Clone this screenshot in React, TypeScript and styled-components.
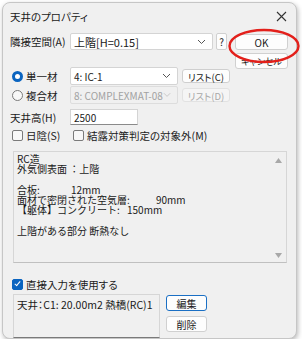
import React from 'react'
import styled, { createGlobalStyle } from 'styled-components'

const GlobalStyle = createGlobalStyle`
    html, body {
        margin: 0;
        background: #ffffff;
    }
    body {
        font-family: 'Noto Sans CJK JP', 'Noto Sans', sans-serif;
        font-feature-settings: 'palt';
        color: #1a1a1a;
    }
`

const layers = [
    { name: '合板:', value: '12mm', tab: 54 },
    { name: '面材で密閉された空気層:', value: '90mm', tab: 139 },
    { name: '【躯体】コンクリート:', value: '150mm', tab: 110 },
]

const App = () => {
    return (
        <>
            <GlobalStyle />
            <Dialog>
                <TitleBar>
                    <span>天井のプロパティ</span>
                    <svg width="11" height="11" viewBox="0 0 11 11">
                        <path d="M1 1 L10 10 M10 1 L1 10" stroke="#333" strokeWidth="1.1" />
                    </svg>
                </TitleBar>
                <Body>
                    <TopSection>
                        <Fields>
                            <Row $top={4} $height={17}>
                                <Label>隣接空間(A)</Label>
                                <Select $width={143} $large>
                                    <span>上階[H=0.15]</span>
                                    <Chevron />
                                </Select>
                                <HelpButton>?</HelpButton>
                            </Row>
                            <Row $top={17} $height={18}>
                                <RadioLabel>
                                    <Radio $checked />
                                    単一材
                                </RadioLabel>
                                <Select $width={108}>
                                    <span>4: IC-1</span>
                                    <Chevron />
                                </Select>
                                <SmallButton>リスト(C)</SmallButton>
                            </Row>
                            <Row $top={1} $height={18}>
                                <RadioLabel>
                                    <Radio />
                                    複合材
                                </RadioLabel>
                                <Select $width={108} $disabled>
                                    <span>8: COMPLEXMAT-08</span>
                                    <Chevron $disabled />
                                </Select>
                                <SmallButton $disabled>リスト(D)</SmallButton>
                            </Row>
                            <Row $top={5} $height={16}>
                                <Label>天井高(H)</Label>
                                <TextInput>2500</TextInput>
                            </Row>
                            <Row $top={4} $height={12}>
                                <CheckLabel $width={61}>
                                    <Check />
                                    日陰(S)
                                </CheckLabel>
                                <CheckLabel>
                                    <Check />
                                    結露対策判定の対象外(M)
                                </CheckLabel>
                            </Row>
                        </Fields>
                        <Buttons>
                            <DialogButton>OK</DialogButton>
                            <DialogButton $narrow>キャンセル</DialogButton>
                        </Buttons>
                    </TopSection>
                    <InfoPanel>
                        <InfoText>
                            <div>RC造</div>
                            <div>外気側表面 ：上階</div>
                            <div>&nbsp;</div>
                            {layers.map((layer) => (
                                <div key={layer.name}>
                                    <TabStop $w={layer.tab}>{layer.name}</TabStop>
                                    {layer.value}
                                </div>
                            ))}
                            <div>&nbsp;</div>
                            <div>上階がある部分 断熱なし</div>
                        </InfoText>
                        <ScrollTrack>
                            <svg width="7" height="5" viewBox="0 0 7 5">
                                <path d="M3.5 0 L7 5 L0 5 Z" fill="#a8a8a8" />
                            </svg>
                            <svg width="7" height="5" viewBox="0 0 7 5">
                                <path d="M0 0 L7 0 L3.5 5 Z" fill="#a8a8a8" />
                            </svg>
                        </ScrollTrack>
                    </InfoPanel>
                    <DirectRow>
                        <Check $checked />
                        直接入力を使用する
                    </DirectRow>
                    <BottomRow>
                        <ListBox>天井：C1: 20.00m2 熱橋(RC)1</ListBox>
                        <SideButtons>
                            <DialogButton $default>編集</DialogButton>
                            <DialogButton>削除</DialogButton>
                        </SideButtons>
                    </BottomRow>
                </Body>
                <Highlight width="72" height="36" viewBox="0 0 72 36">
                    <ellipse cx="36" cy="18" rx="34.5" ry="16" fill="none" stroke="#e3201b" strokeWidth="2.4" />
                </Highlight>
            </Dialog>
        </>
    )
}

const Chevron = ({ $disabled }: { $disabled?: boolean }) => (
    <svg width="9" height="6" viewBox="0 0 9 6">
        <path d="M1 1 L4.5 4.5 L8 1" fill="none" stroke={$disabled ? '#c4c4c4' : '#555'} strokeWidth="1" />
    </svg>
)

const Dialog = styled.div`
    position: relative;
    box-sizing: border-box;
    margin: 2px 0 0 2px;
    width: 295px;
    height: 337px;
    border: 1px solid #c6c6c6;
    border-radius: 8px;
    background: #f0f0f0;
    box-shadow: 1px 2px 5px rgba(0, 0, 0, 0.28);
    display: flex;
    flex-direction: column;
`
const TitleBar = styled.div`
    height: 26px;
    padding: 0 7px;
    display: flex;
    align-items: center;
    justify-content: space-between;
    font-size: 10.5px;
    color: #1a1a1a;
    svg {
        margin-right: 2px;
    }
`
const Body = styled.div`
    padding: 0 7px;
    display: flex;
    flex-direction: column;
    font-size: 10.5px;
`
const TopSection = styled.div`
    display: flex;
    gap: 5px;
`
const Fields = styled.div`
    width: 220px;
    display: flex;
    flex-direction: column;
`
const Row = styled.div<{ $top: number; $height: number }>`
    margin-top: ${(p) => p.$top}px;
    height: ${(p) => p.$height}px;
    display: flex;
    align-items: center;
`
const Label = styled.div`
    width: 60px;
    font-size: 10.5px;
    white-space: nowrap;
`
const Select = styled.div<{ $width: number; $disabled?: boolean; $large?: boolean }>`
    box-sizing: border-box;
    width: ${(p) => p.$width}px;
    height: 100%;
    padding: 0 6px 0 3px;
    display: flex;
    align-items: center;
    justify-content: space-between;
    background: ${(p) => (p.$disabled ? '#f0f0f0' : '#ffffff')};
    border: 1px solid ${(p) => (p.$disabled ? '#dddddd' : '#d4d4d4')};
    border-radius: 2px;
    color: ${(p) => (p.$disabled ? '#a2a2a2' : '#1a1a1a')};
    font-size: ${(p) => (p.$large ? '11px' : '10px')};
    white-space: nowrap;
    overflow: hidden;
`
const HelpButton = styled.div`
    box-sizing: border-box;
    margin-left: 3px;
    width: 11px;
    height: 100%;
    display: grid;
    place-items: center;
    background: #fdfdfd;
    border: 1px solid #d0d0d0;
    border-radius: 2px;
    font-size: 10px;
`
const SmallButton = styled.div<{ $disabled?: boolean }>`
    box-sizing: border-box;
    margin-left: 4px;
    width: 48px;
    height: 14px;
    display: grid;
    place-items: center;
    background: ${(p) => (p.$disabled ? '#f5f5f5' : '#fdfdfd')};
    border: 1px solid ${(p) => (p.$disabled ? '#e2e2e2' : '#cfcfcf')};
    border-radius: 3px;
    color: ${(p) => (p.$disabled ? '#a8a8a8' : '#1a1a1a')};
    font-size: 9.5px;
`
const RadioLabel = styled.div`
    width: 60px;
    display: flex;
    align-items: center;
    gap: 3px;
    padding-left: 2px;
    box-sizing: border-box;
    font-size: 10.5px;
`
const Radio = styled.span<{ $checked?: boolean }>`
    box-sizing: border-box;
    width: 11px;
    height: 11px;
    border-radius: 50%;
    background: ${(p) => (p.$checked ? '#ffffff' : '#f8f8f8')};
    border: ${(p) => (p.$checked ? '3px solid #0a64c0' : '1px solid #7a7a7a')};
`
const TextInput = styled.div`
    box-sizing: border-box;
    width: 68px;
    height: 100%;
    padding-left: 3px;
    display: flex;
    align-items: center;
    background: #ffffff;
    border: 1px solid #d4d4d4;
    border-bottom-color: #8a8a8a;
    font-size: 10px;
`
const CheckLabel = styled.div<{ $width?: number }>`
    width: ${(p) => (p.$width ? `${p.$width}px` : 'auto')};
    display: flex;
    align-items: center;
    gap: 3px;
    padding-left: 2px;
    box-sizing: border-box;
    font-size: 10.5px;
    white-space: nowrap;
`
const Check = styled.span<{ $checked?: boolean }>`
    position: relative;
    box-sizing: border-box;
    width: 11px;
    height: 11px;
    border-radius: 2px;
    background: ${(p) => (p.$checked ? '#0a64c0' : '#f8f8f8')};
    border: 1px solid ${(p) => (p.$checked ? '#0a64c0' : '#7a7a7a')};
    &::after {
        content: '';
        display: ${(p) => (p.$checked ? 'block' : 'none')};
        position: absolute;
        left: 3px;
        top: 0px;
        width: 2px;
        height: 5px;
        border: solid #ffffff;
        border-width: 0 1.2px 1.2px 0;
        transform: rotate(40deg);
    }
`
const Buttons = styled.div`
    width: 53px;
    padding-top: 5px;
    display: flex;
    flex-direction: column;
    gap: 3px;
`
const DialogButton = styled.div<{ $default?: boolean; $narrow?: boolean }>`
    box-sizing: border-box;
    width: 100%;
    height: 16px;
    display: grid;
    place-items: center;
    background: #fdfdfd;
    border: 1px solid ${(p) => (p.$default ? '#1a6fc4' : '#d0d0d0')};
    border-radius: 3px;
    font-size: ${(p) => (p.$narrow ? '9px' : '10px')};
    white-space: nowrap;
`
const InfoPanel = styled.div`
    box-sizing: border-box;
    margin: 10px 0 0 3px;
    width: 274px;
    height: 112px;
    display: flex;
    background: #f0f0f0;
    border: 1px solid #d6d6d6;
    border-bottom-color: #c0c0c0;
`
const InfoText = styled.div`
    flex: 1;
    padding: 2px 0 0 3px;
    font-size: 10px;
    line-height: 10.3px;
    white-space: nowrap;
    font-feature-settings: normal;
`
const TabStop = styled.span<{ $w: number }>`
    display: inline-block;
    width: ${(p) => p.$w}px;
`
const ScrollTrack = styled.div`
    width: 16px;
    padding: 6px 0 4px;
    display: flex;
    flex-direction: column;
    align-items: center;
    justify-content: space-between;
`
const DirectRow = styled.div`
    margin-top: 15px;
    height: 12px;
    display: flex;
    align-items: center;
    gap: 3px;
    padding-left: 2px;
    font-size: 10.5px;
`
const BottomRow = styled.div`
    margin-top: 4px;
    display: flex;
    gap: 6px;
`
const ListBox = styled.div`
    box-sizing: border-box;
    margin-left: 3px;
    width: 147px;
    height: 44px;
    padding: 2px 3px;
    background: #f0f0f0;
    border: 1px solid #d6d6d6;
    border-bottom-color: #7a7a7a;
    font-size: 10.5px;
    white-space: nowrap;
`
const SideButtons = styled.div`
    width: 41px;
    padding-top: 1px;
    display: flex;
    flex-direction: column;
    gap: 5px;
`
const Highlight = styled.svg`
    position: absolute;
    left: 225px;
    top: 25px;
`

export default App
